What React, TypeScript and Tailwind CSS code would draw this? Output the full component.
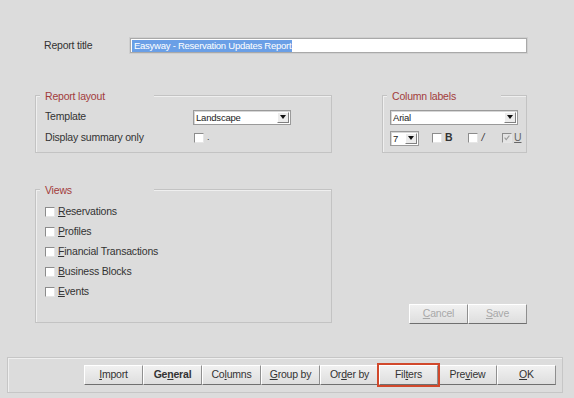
import type { ReactNode } from "react";

const FONT = "font-['Liberation_Sans',Arial,sans-serif]";

function Group({
  title,
  className,
  children,
}: {
  title: string;
  className: string;
  children: ReactNode;
}) {
  return (
    <div className={`relative border border-[#c3c3c3] shadow-[inset_1px_1px_0_#efefef] ${className}`}>
      <span className="absolute -top-[6px] left-[4px] w-[114px] bg-[#dcdcdc] pl-[5px] leading-[12px] text-[#a23b3b] text-[10.5px] tracking-[-0.2px]">
        {title}
      </span>
      {children}
    </div>
  );
}

function Check({ checked, disabled }: { checked?: boolean; disabled?: boolean }) {
  return (
    <span
      className={`relative inline-block w-[10px] h-[10px] shrink-0 border-t border-l border-[#8c8c8c] border-b border-r border-b-[#e6e6e6] border-r-[#e6e6e6] ${
        disabled ? "bg-[#e4e4e4]" : "bg-white"
      }`}
    >
      {checked ? (
        <svg viewBox="0 0 10 10" className="absolute inset-0 w-full h-full">
          <path d="M2 4.5 L4 7 L8 2" fill="none" stroke="#9a9a9a" strokeWidth="1.3" />
        </svg>
      ) : null}
    </span>
  );
}

function Select({ value, className }: { value: string; className: string }) {
  return (
    <div
      className={`flex items-stretch bg-white border border-[#9a9a9a] shadow-[inset_1px_1px_0_#d6d6d6] ${className}`}
    >
      <span className="flex-1 pl-[2px] leading-[13px] text-[9.5px] text-[#222]">{value}</span>
      <span className="w-[12px] my-[1px] mr-[1px] flex items-center justify-center bg-[#ececec] border-r border-b border-[#808080] border-t border-l border-t-white border-l-white">
        <svg viewBox="0 0 6 4" className="w-[6px] h-[4px]">
          <path d="M0 0 H6 L3 4 Z" fill="#111" />
        </svg>
      </span>
    </div>
  );
}

function Button({
  children,
  disabled,
  bold,
}: {
  children: ReactNode;
  disabled?: boolean;
  bold?: boolean;
}) {
  return (
    <div
      className={`w-[59px] h-[20px] flex items-center justify-center bg-gradient-to-b from-[#f1f1f1] to-[#dedede] border-t border-l border-white border-r border-b border-r-[#8f8f8f] border-b-[#6f6f6f] text-[10.5px] tracking-[-0.2px] ${
        disabled ? "text-[#a8a8a8]" : "text-[#333]"
      } ${bold ? "font-bold" : ""}`}
    >
      {children}
    </div>
  );
}

const VIEWS: [string, string][] = [
  ["R", "eservations"],
  ["P", "rofiles"],
  ["F", "inancial Transactions"],
  ["B", "usiness Blocks"],
  ["E", "vents"],
];

export default function App() {
  return (
    <div className={`w-[574px] h-[398px] bg-[#dcdcdc] text-[10.5px] tracking-[-0.2px] text-[#333] overflow-hidden ${FONT}`}>
      {/* title row */}
      <div className="pt-[38px] pl-[44px] flex items-center">
        <span className="w-[86px]">Report title</span>
        <div className="w-[397px] h-[15px] bg-white border border-[#a9a9a9] shadow-[0_0_0_1px_#cfcfcf] flex items-center pl-[1px]">
          <span className="bg-[#6a9fe6] text-white leading-[12px] pl-[2px] pr-[1px] text-[9.5px] tracking-[-0.25px]">
            Easyway - Reservation Updates Report
          </span>
        </div>
      </div>

      {/* layout + column labels */}
      <div className="mt-[41px] pl-[35px] flex">
        <Group title="Report layout" className="w-[297px] h-[58px] pt-[14px] pl-[9px]">
          <div className="flex items-center h-[15px]">
            <span className="w-[148px]">Template</span>
            <Select value="Landscape" className="w-[98px] h-[15px]" />
          </div>
          <div className="flex items-center h-[14px] mt-[6px]">
            <span className="w-[149px]">Display summary only</span>
            <Check />
            <span className="ml-[3px] text-[9px]">.</span>
          </div>
        </Group>

        <Group title="Column labels" className="ml-[50px] w-[145px] h-[58px] pt-[14px] pl-[7px]">
          <Select value="Arial" className="w-[128px] h-[15px]" />
          <div className="flex items-center mt-[6px] h-[15px]">
            <Select value="7" className="w-[29px] h-[15px]" />
            <span className="ml-[13px] flex items-center">
              <Check />
              <span className="ml-[3px] font-bold">B</span>
            </span>
            <span className="ml-[16px] flex items-center">
              <Check />
              <span className="ml-[3px] italic">/</span>
            </span>
            <span className="ml-[18px] flex items-center">
              <Check checked disabled />
              <span className="ml-[2px] underline text-[#666]">U</span>
            </span>
          </div>
        </Group>
      </div>

      {/* views + cancel/save */}
      <div className="mt-[36px] pl-[35px] flex">
        <Group title="Views" className="w-[297px] h-[134px] pt-[16px] pl-[9px]">
          <div className="flex flex-col gap-[8px]">
            {VIEWS.map(([k, rest]) => (
              <div key={k + rest} className="flex items-center h-[12px]">
                <Check />
                <span className="ml-[3px]">
                  <u>{k}</u>
                  {rest}
                </span>
              </div>
            ))}
          </div>
        </Group>
        <div className="ml-[77px] pt-[115px] flex">
          <Button disabled>
            <u>C</u>ancel
          </Button>
          <Button disabled>
            <u>S</u>ave
          </Button>
        </div>
      </div>

      {/* bottom tab buttons */}
      <div className="mt-[33px] ml-[7px] w-[556px] h-[36px] border border-[#c6c6c6] shadow-[inset_1px_1px_0_#efefef] flex items-start justify-end pt-[7px] pr-[6px]">
        <Button>
          <u>I</u>mport
        </Button>
        <Button bold>
          Ge<u>n</u>eral
        </Button>
        <Button>
          Co<u>l</u>umns
        </Button>
        <Button>
          <u>G</u>roup by
        </Button>
        <Button>
          Or<u>d</u>er by
        </Button>
        <div className="relative">
          <Button>
            Fil<u>t</u>ers
          </Button>
          <span className="absolute -inset-[2px] border-2 border-[#d1482b]" />
        </div>
        <Button>
          Pre<u>v</u>iew
        </Button>
        <Button>
          <u>O</u>K
        </Button>
      </div>
    </div>
  );
}
